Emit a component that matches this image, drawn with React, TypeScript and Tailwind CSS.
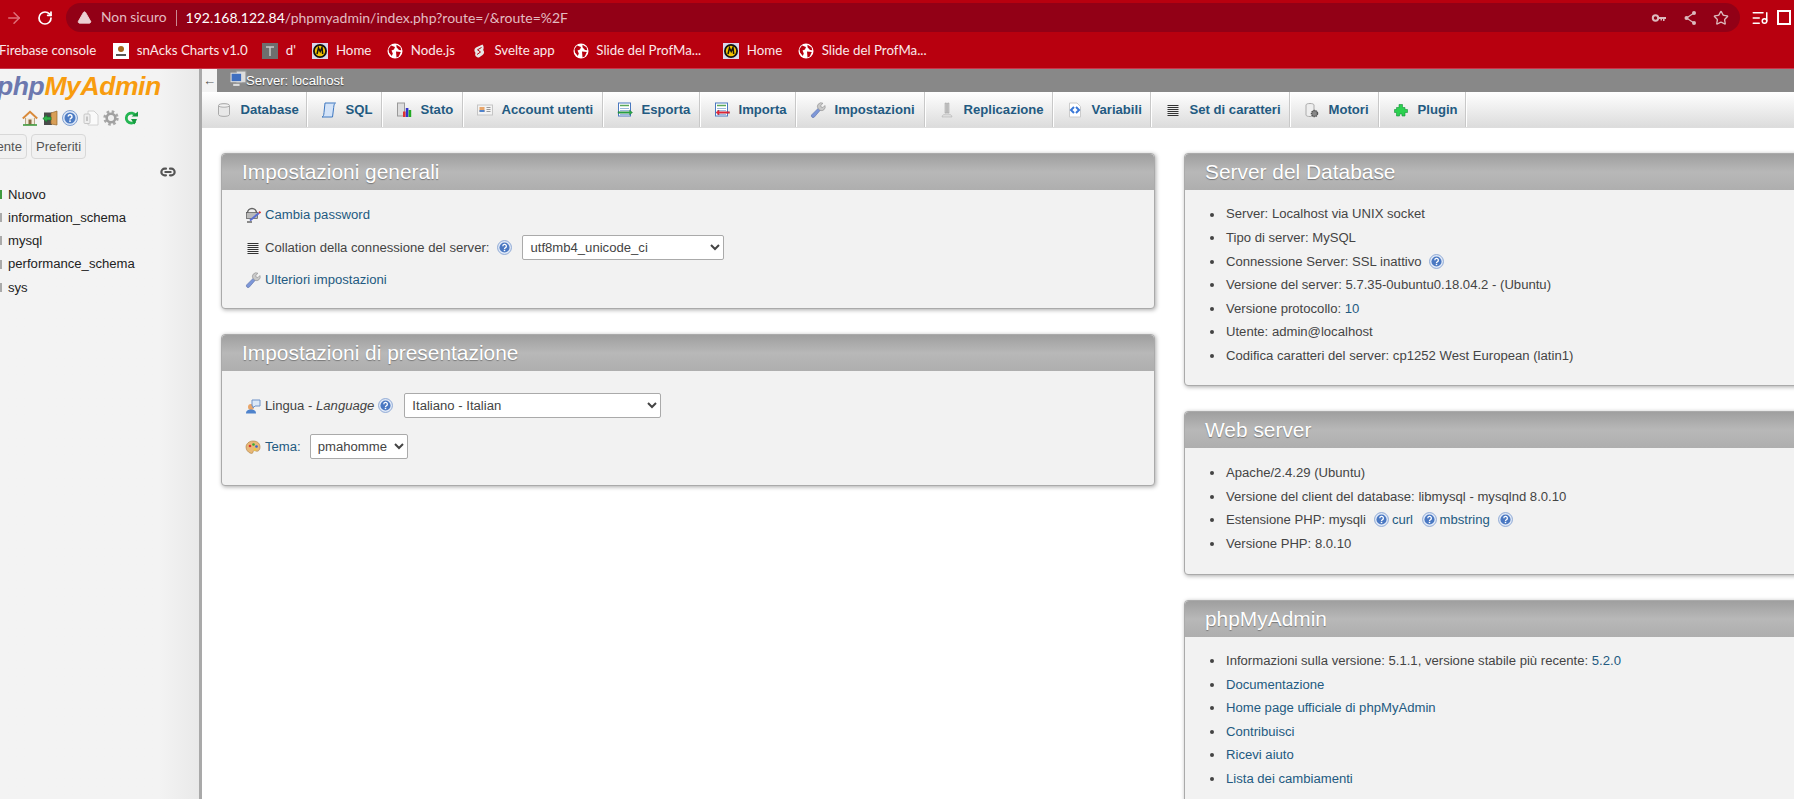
import { ArrowRight, RotateCw, Star, TriangleAlert, ListMusic, Link2 } from "lucide-react";
import type { ReactNode } from "react";

const Ico = ({ children, className = "" }: { children: ReactNode; className?: string }) => (
  <svg viewBox="0 0 16 16" className={`w-4 h-4 shrink-0 ${className}`}>{children}</svg>
);

const Help = ({ className = "" }: { className?: string }) => (
  <svg viewBox="0 0 16 16" className={`w-[15px] h-[15px] shrink-0 ${className}`}>
    <circle cx="8" cy="8" r="7.4" fill="#e3ebf8" stroke="#86a3d2" />
    <circle cx="8" cy="8" r="5.4" fill="#4a78c2" />
    <path d="M6.2 6.6a1.9 1.9 0 1 1 2.7 1.7c-.6.3-.9.6-.9 1.3" fill="none" stroke="#fff" strokeWidth="1.4" />
    <rect x="7.2" y="10.4" width="1.6" height="1.5" fill="#fff" />
  </svg>
);

const Wrench = () => (
  <Ico>
    <path d="M1.5 13 8.5 6l2 2-6.300 7.200a1.800 1.800 0 0 1-2.700-2.200z" fill="#7d97d8" stroke="#5a6fa8" strokeWidth=".6" />
    <path d="M8 6.500a3.700 3.700 0 0 1 5-5.200l-2.200 2 .3 1.800 1.800.4 2-2a3.700 3.700 0 0 1-5 4.800z" fill="#c9c9c9" stroke="#8d8d8d" strokeWidth=".6" />
  </Ico>
);

const Lines = () => (
  <Ico>
    <path d="M2.500 3.500h11M2.500 5.500h11M2.500 7.500h11M2.500 9.500h11M2.500 11.500h11M2.500 13.500h11" stroke="#333" strokeWidth="1" />
  </Ico>
);

const Globe = () => (
  <svg viewBox="0 0 16 16" className="w-4 h-4 shrink-0">
    <circle cx="8" cy="8" r="7.500" fill="#fff" />
    <path d="M4 2.500 8 4 7 6.500 4.500 7.500 5.800 10.500 4.800 13 2 9.500 1.500 6zM9.500 1.800l4 2.500.8 3-2.300-.4-2.500-2.700zM9 8.500l4.800.5-2 4.500L9.500 14.500z" fill="#b8000f" />
  </svg>
);

const HomeFav = () => (
  <svg viewBox="0 0 16 16" className="w-4 h-4 shrink-0">
    <rect width="16" height="16" fill="#d7d7ee" />
    <circle cx="8" cy="8" r="7" fill="#111" />
    <circle cx="8" cy="8" r="5.200" fill="#f0c000" />
    <path d="M5 11 6.500 5 8.200 8.500 10 4.500 10.700 11" fill="none" stroke="#111" strokeWidth="1.500" />
  </svg>
);

const bookmarks = [
  { text: "Firebase console", icon: null, cls: "-ml-[1px] mr-[17px]" },
  {
    text: "snAcks Charts v1.0",
    cls: "mr-[14.5px]",
    icon: (
      <svg viewBox="0 0 16 16" className="w-4 h-4 shrink-0">
        <rect width="16" height="16" fill="#fff" />
        <circle cx="8" cy="6" r="3" fill="#a5671c" />
        <rect x="3" y="11" width="10" height="2" fill="#555" />
      </svg>
    ),
  },
  {
    text: "d'",
    cls: "mr-[16.5px]",
    icon: (
      <svg viewBox="0 0 16 16" className="w-4 h-4 shrink-0">
        <rect width="16" height="16" fill="#6e6e6e" />
        <path d="M4 4h8M8 4v9" stroke="#c8c8c8" strokeWidth="1.500" />
      </svg>
    ),
  },
  { text: "Home", icon: <HomeFav />, cls: "mr-[16px]" },
  { text: "Node.js", icon: <Globe />, cls: "mr-[16px]" },
  {
    text: "Svelte app",
    cls: "mr-[18px]",
    icon: (
      <svg viewBox="0 0 16 16" className="w-4 h-4 shrink-0">
        <path d="M11.500 1.500 5 4.600C2.800 6 3 8.500 4.500 10c-1 2 .2 4.500 3.500 4.500l3.600-2.600c2-1.600 1.800-3.600.6-5 1-2 .3-4.600-.7-5.400z" fill="#e6e6e6" />
        <path d="M10.500 4.500 6.500 6.800 9.500 9 6 11.500" fill="none" stroke="#b8000f" strokeWidth="1" />
      </svg>
    ),
  },
  { text: "Slide del ProfMa...", icon: <Globe />, cls: "mr-[22px]" },
  { text: "Home", icon: <HomeFav />, cls: "mr-[16px]" },
  { text: "Slide del ProfMa...", icon: <Globe />, cls: "" },
];

const ChromeBar = () => (
  <div className="h-[69px] shrink-0 bg-[#b8000f] border-b border-[#c9354a] font-['Lato',sans-serif] text-white">
    <div className="h-[34px] flex items-center pt-[1px]">
      <ArrowRight className="w-[18px] h-[18px] ml-[5px] shrink-0 text-[#df6f7a]" strokeWidth={2} />
      <RotateCw className="w-4 h-4 ml-[14px] shrink-0 text-white" strokeWidth={2.6} />
      <div className="ml-[13px] w-[1674px] shrink-0 h-[29px] rounded-full bg-[#920016] flex items-center">
        <TriangleAlert className="w-[15px] h-[15px] ml-[11px] text-[#ecd0d3] fill-[#ecd0d3]" strokeWidth={1.5} />
        <span className="ml-[9px] text-[#e3bcc1] text-[13.8px]">Non sicuro</span>
        <span className="ml-[9px] w-px h-[16px] bg-[#c98a93]"></span>
        <span className="ml-[9px] text-[14px] text-white">192.168.122.84<span className="text-[#e3bcc1]">/phpmyadmin/index.php?route=/&amp;route=%2F</span></span>
        <div className="ml-auto mr-[11px] flex items-center gap-[15px] text-[#dcb9bd]">
          <svg viewBox="0 0 16 16" className="w-4 h-4">
            <circle cx="4.500" cy="8" r="2.700" fill="none" stroke="currentColor" strokeWidth="2" />
            <path d="M7 7h8v2h-1.500v2H12V9h-1v1.500H9.500V9H7z" fill="currentColor" />
          </svg>
          <svg viewBox="0 0 16 16" className="w-4 h-4">
            <path d="M12 3 4.500 8l7.500 5" fill="none" stroke="currentColor" strokeWidth="1.200" />
            <circle cx="12" cy="3" r="2" fill="currentColor" />
            <circle cx="4.500" cy="8" r="2" fill="currentColor" />
            <circle cx="12" cy="13" r="2" fill="currentColor" />
          </svg>
          <Star className="w-[16px] h-[16px]" strokeWidth={2} />
        </div>
      </div>
      <ListMusic className="w-[18px] h-[18px] ml-[11px] shrink-0 text-white" strokeWidth={2} />
      <span className="ml-[8px] w-[14px] h-[15px] border-2 border-white shrink-0"></span>
    </div>
    <div className="h-[34px] flex items-center text-[13.3px] text-[#fbe9ea] whitespace-nowrap">
      {bookmarks.map((b, i) => (
        <div key={i} className={`flex items-center gap-[7.5px] ${b.cls}`}>
          {b.icon}
          <span>{b.text}</span>
        </div>
      ))}
    </div>
  </div>
);

const Sidebar = () => (
  <div className="w-[199px] shrink-0 h-full bg-linear-to-r from-[#f3f3f3] from-80% to-[#e9e9e9] border-r-[3px] border-[#a9a9a9] box-content overflow-hidden text-[13.12px] text-[#222]">
    <div className="h-[38px] pb-[6px] flex items-end whitespace-nowrap -ml-[3px] italic font-bold text-[26.5px] leading-[30px] tracking-[-0.4px]">
      <span className="text-[#6c78af]">php</span>
      <span className="text-[#f89c0e]">MyAdmin</span>
    </div>
    <div className="mt-[3px] ml-[22px] flex items-center gap-[4px] h-[16px]">
      <Ico>
        <path d="M3.500 8v6.500h9V8" fill="#f4ead9" stroke="#a8926e" strokeWidth=".8" />
        <path d="M.8 8.500 8 1.800l7.200 6.700" fill="none" stroke="#d98a3a" strokeWidth="2" />
        <rect x="6.500" y="9.500" width="3" height="5" fill="#8a6a44" />
        <path d="M1 15h14" stroke="#3f9a3f" strokeWidth="1.600" />
      </Ico>
      <Ico>
        <rect x="2" y="2.500" width="8" height="12.500" fill="#4a4a4a" />
        <path d="M9 3 15 1v14l-6-1z" fill="#d99f57" stroke="#96682c" strokeWidth=".7" />
        <path d="M.8 8.500 4.800 5v2H9v3H4.800v2z" fill="#31b04a" stroke="#137a2b" strokeWidth=".6" />
      </Ico>
      <svg viewBox="0 0 16 16" className="w-4 h-4 shrink-0">
        <circle cx="8" cy="8" r="7.500" fill="#dbe6f7" stroke="#7f9fd0" />
        <circle cx="8" cy="8" r="5.500" fill="#4d7cc4" />
        <path d="M6.200 6.600a1.900 1.900 0 1 1 2.700 1.700c-.6.3-.9.6-.9 1.300" fill="none" stroke="#fff" strokeWidth="1.500" />
        <rect x="7.200" y="10.400" width="1.600" height="1.500" fill="#fff" />
      </svg>
      <Ico className="ml-[1px]">
        <path d="M5 1h6l4 4v10H5z" fill="#fafafa" stroke="#c9c9c9" strokeWidth=".8" />
        <rect x="1" y="4" width="6" height="9.500" rx="1" fill="#eee" stroke="#bdbdbd" strokeWidth=".8" />
        <rect x="3" y="6.500" width="2" height="4.500" fill="#c4c4c4" />
      </Ico>
      <Ico>
        <circle cx="8" cy="8" r="6" fill="none" stroke="#a8a8a8" strokeWidth="3.400" strokeDasharray="2.400 2.300" />
        <circle cx="8" cy="8" r="4.300" fill="none" stroke="#a0a0a0" strokeWidth="2.600" />
        <circle cx="8" cy="8" r="2" fill="#eee" />
      </Ico>
      <Ico>
        <path d="M12.500 5.500A5 5 0 1 0 12 11.500" fill="none" stroke="#24b552" strokeWidth="2.800" />
        <path d="M8.500 6.500h6.500V1.500zM8 9h6l-2.500 5.500z" fill="#179a40" />
      </Ico>
    </div>
    <div className="mt-[8px] flex gap-[4px] -ml-[30px] text-[#555]">
      <span className="w-[57px] h-[25px] flex items-center justify-end pr-[4px] bg-[#f1f1f1] border border-[#d8d8d8] rounded-[4px]">Recente</span>
      <span className="h-[25px] px-[4px] flex items-center bg-[#f1f1f1] border border-[#d8d8d8] rounded-[4px]">Preferiti</span>
    </div>
    <div className="mt-[7px] h-[12px] flex justify-end pr-[23px] items-center">
      <Link2 className="w-4 h-4 text-[#555]" strokeWidth={3.2} />
    </div>
    <ul className="mt-[5px]">
      {["Nuovo", "information_schema", "mysql", "performance_schema", "sys"].map((n, i) => (
        <li key={n} className="h-[23.2px] flex items-center relative pl-[8px]">
          <span className={`absolute left-0 top-[7px] w-[2px] h-[9px] ${i === 0 ? "bg-[#3f9a3f]" : "bg-[#aaa]"}`}></span>
          {n}
        </li>
      ))}
    </ul>
  </div>
);

const tabs: { label: string; w: string; icon: ReactNode }[] = [
  {
    label: "Database",
    w: "w-[105px]",
    icon: (
      <Ico>
        <path d="M2.500 3.500c0-2.500 11-2.500 11 0v9c0 2.500-11 2.500-11 0z" fill="#e8e8e8" stroke="#aaa" />
        <path d="M2.500 3.500c0 2.200 11 2.200 11 0" fill="#fafafa" stroke="#aaa" />
      </Ico>
    ),
  },
  {
    label: "SQL",
    w: "w-[75px]",
    icon: (
      <Ico>
        <path d="M4 1h10.500c-1.500 1-1.500 2-1.800 4.500L11.500 15H1c1.500-.5 1.800-2 2-4.500z" fill="#d3e3f8" stroke="#3f78c0" />
      </Ico>
    ),
  },
  {
    label: "Stato",
    w: "w-[81px]",
    icon: (
      <Ico>
        <rect x="1.500" y="1" width="7" height="13" fill="#ddd" stroke="#999" />
        <rect x="7" y="9.500" width="2.600" height="5.500" fill="#d33" />
        <rect x="9.800" y="6" width="2.600" height="9" fill="#33c" />
        <rect x="12.600" y="8" width="2.600" height="7" fill="#2a2" />
      </Ico>
    ),
  },
  {
    label: "Account utenti",
    w: "w-[140px]",
    icon: (
      <Ico>
        <rect x=".5" y="3" width="15" height="10" fill="#f3f3f3" stroke="#c5c5c5" />
        <rect x="2.500" y="5" width="5" height="5" fill="#e8a56a" />
        <rect x="2.500" y="8" width="5" height="2" fill="#4f83cc" />
        <path d="M9.500 5.500h4M9.500 7.500h4M9.500 9.500h4" stroke="#999" />
      </Ico>
    ),
  },
  {
    label: "Esporta",
    w: "w-[97px]",
    icon: (
      <Ico>
        <rect x="1.500" y="1" width="12" height="13" fill="#fff" stroke="#4a79c0" />
        <path d="M3 3.500h9" stroke="#5aa85a" strokeWidth="1.500" />
        <path d="M3 6.500h9M3 8.500h9M3 12.500h9" stroke="#9bb8dc" />
        <path d="M1 9.700h11.500V8l3 2.500-3 2.500v-1.700H1z" fill="#2aa84a" stroke="#14702c" strokeWidth=".4" />
      </Ico>
    ),
  },
  {
    label: "Importa",
    w: "w-[96px]",
    icon: (
      <Ico>
        <rect x="1.500" y="1" width="12" height="13" fill="#fff" stroke="#4a79c0" />
        <path d="M3 3.500h9" stroke="#5aa85a" strokeWidth="1.500" />
        <path d="M3 6.500h9M3 8.500h9M3 12.500h9" stroke="#9bb8dc" />
        <path d="M15.500 9.700H5V8L2 10.500 5 13v-1.700h10.500z" fill="#e8283c" stroke="#a01020" strokeWidth=".4" />
      </Ico>
    ),
  },
  { label: "Impostazioni", w: "w-[129px]", icon: <Wrench /> },
  {
    label: "Replicazione",
    w: "w-[128px]",
    icon: (
      <Ico>
        <path d="M6 1h1.500v10H6zM8.500 1H10v10H8.500z" fill="#ccc" stroke="#999" strokeWidth=".5" />
        <path d="M3 15c0-2 2-3 5-3s5 1 5 3z" fill="#ddd" stroke="#aaa" strokeWidth=".5" />
      </Ico>
    ),
  },
  {
    label: "Variabili",
    w: "w-[98px]",
    icon: (
      <Ico>
        <path d="M2.500 1h7.500l3.500 3.500V15h-11z" fill="#fff" stroke="#ccc" />
        <path d="M7 5 4 8l3 3M9 5l3 3-3 3" fill="none" stroke="#3a78d8" strokeWidth="2" />
      </Ico>
    ),
  },
  { label: "Set di caratteri", w: "w-[139px]", icon: <Lines /> },
  {
    label: "Motori",
    w: "w-[89px]",
    icon: (
      <Ico>
        <path d="M2 3c0-2 8-2 8 0v10c0 2-8 2-8 0z" fill="#eee" stroke="#aaa" />
        <circle cx="10.500" cy="11.500" r="3" fill="#888" stroke="#555" strokeWidth="1.500" strokeDasharray="1.500 .6" />
      </Ico>
    ),
  },
  {
    label: "Plugin",
    w: "w-[87px]",
    icon: (
      <Ico>
        <path d="M6 2.500h3.500v3H12v2h2.500v3H12V14H9v-2H6.500v2H3.500v-3.500H1.500v-3h2V5.500H6z" fill="#2bd14f" stroke="#15913a" strokeWidth=".6" />
      </Ico>
    ),
  },
];

const Title = ({ children }: { children: ReactNode }) => (
  <div className="h-[36px] rounded-t-[4px] bg-linear-to-b from-[#9f9f9f] via-[#b8b8b8] via-50% to-[#aeaeae] pl-[20px] flex items-center text-[20.9px] text-white [text-shadow:0_1px_1px_#777]">
    {children}
  </div>
);

const Fieldset = ({ title, className = "", children }: { title: string; className?: string; children: ReactNode }) => (
  <div className={`border border-[#aaa] rounded-[4px] bg-[#f2f2f2] shadow-[1px_1px_4px_#aaa] ${className}`}>
    <Title>{title}</Title>
    {children}
  </div>
);

const Li = ({ children }: { children: ReactNode }) => (
  <li className="h-[23.6px] flex items-center relative pl-[41px]">
    <span className="absolute left-[25px] top-[10px] w-[4px] h-[4px] rounded-full bg-[#444]"></span>
    {children}
  </li>
);

const A = ({ children }: { children: ReactNode }) => <a className="text-[#235a81]">{children}</a>;

const Row = ({ icon, className = "", children }: { icon: ReactNode; className?: string; children: ReactNode }) => (
  <div className={`flex items-center pl-[23px] gap-[4px] ${className}`}>
    {icon}
    {children}
  </div>
);

const selectCls = "h-[25px] bg-white border border-[#aaa] rounded-[2px] pl-[3px] text-[13.12px] text-[#444]";

export default function App() {
  return (
    <div className="w-[1794px] h-[799px] overflow-hidden flex flex-col bg-white font-['Liberation_Sans',sans-serif] text-[13.12px] text-[#444]">
      <ChromeBar />
      <div className="flex-1 flex min-h-0">
        <Sidebar />
        <div className="w-[1592px] shrink-0 flex flex-col">
          <div className="h-[23px] bg-[#888] flex items-center shrink-0 text-white [text-shadow:0_1px_1px_#444]">
            <span className="w-[15px] h-full bg-[#f3f3f3] text-[#555] flex items-center justify-center text-[13px] [text-shadow:none]">←</span>
            <svg viewBox="0 0 16 16" className="w-[17px] h-[17px] ml-[13px] -mr-[1px] -mt-[4px] shrink-0">
              <rect x="6" y="1" width="9" height="11" fill="#ddd" stroke="#999" />
              <rect x="1" y="3" width="10" height="8" fill="#3f6fc0" stroke="#ddd" />
              <path d="M3 14h6" stroke="#ddd" strokeWidth="2" />
            </svg>
            Server: localhost
          </div>
          <div className="h-[36px] shrink-0 flex bg-linear-to-b from-white to-[#dcdcdc] border-b border-[#ddd] font-bold text-[#235a81]">
            {tabs.map((t) => (
              <div key={t.label} className={`${t.w} shrink-0 h-full flex items-center pl-[14px] gap-[8.500px] border-r border-[#c8c8c8] shadow-[1px_0_0_#fff] whitespace-nowrap`}>
                {t.icon}
                <span>{t.label}</span>
              </div>
            ))}
          </div>
          <div className="flex-1 flex pl-[19px] pt-[25px] gap-[29px] items-start min-h-0">
            <div className="w-[934px] shrink-0 flex flex-col gap-[25px]">
              <Fieldset title="Impostazioni generali" className="h-[156px]">
                <Row icon={
                  <Ico>
                    <circle cx="7" cy="6" r="4.500" fill="none" stroke="#666" strokeWidth="1.500" />
                    <rect x="1.500" y="5.500" width="11" height="6" fill="#bbb" stroke="#555" strokeWidth=".7" />
                    <path d="M5 13.500 14 6" stroke="#5b6fd0" strokeWidth="2" />
                    <path d="M14 6l1.500-1.200" stroke="#d33" strokeWidth="2" />
                    <path d="M2 15h5" stroke="#222" />
                  </Ico>
                } className="mt-[15px] h-[20px]">
                  <A>Cambia password</A>
                </Row>
                <Row icon={<Lines />} className="mt-[10px] h-[25px]">
                  <span>Collation della connessione del server:</span>
                  <Help className="ml-[4px]" />
                  <select className={`${selectCls} w-[202px] ml-[6px]`} defaultValue="u">
                    <option value="u">utf8mb4_unicode_ci</option>
                  </select>
                </Row>
                <Row icon={<Wrench />} className="mt-[10px] h-[20px]">
                  <A>Ulteriori impostazioni</A>
                </Row>
              </Fieldset>
              <Fieldset title="Impostazioni di presentazione" className="h-[152px]">
                <Row icon={
                  <Ico>
                    <circle cx="6" cy="9" r="3" fill="#e8a56a" />
                    <path d="M1 15.500c0-3 2-4 5-4s5 1 5 4z" fill="#4f83cc" />
                    <path d="M7 2h8v6h-5l-2 2V8H7z" fill="#dbe8f8" stroke="#6f92c8" />
                  </Ico>
                } className="mt-[22px] h-[25px]">
                  <span>Lingua - <i>Language</i></span>
                  <Help />
                  <select className={`${selectCls} w-[257px] ml-[7px]`} defaultValue="i">
                    <option value="i">Italiano - Italian</option>
                  </select>
                </Row>
                <Row icon={
                  <Ico>
                    <path d="M8 2c5 0 7 3 7 6s-2 5-4 4-3 0-3 1-1 2-3 1-4-3-4-6 3-6 7-6z" fill="#e8b878" stroke="#a87a3a" strokeWidth=".6" />
                    <circle cx="5" cy="7" r="1.300" fill="#d33" />
                    <circle cx="8.500" cy="5.500" r="1.300" fill="#3a3" />
                    <circle cx="11.500" cy="7.500" r="1.300" fill="#36c" />
                    <circle cx="10" cy="10.500" r="1.300" fill="#ec3" />
                  </Ico>
                } className="mt-[16px] h-[25px]">
                  <A>Tema:</A>
                  <select className={`${selectCls} w-[98px] ml-[5px]`} defaultValue="p">
                    <option value="p">pmahomme</option>
                  </select>
                </Row>
              </Fieldset>
            </div>
            <div className="w-[700px] shrink-0 flex flex-col gap-[25px]">
              <Fieldset title="Server del Database" className="h-[233px]">
                <ul className="pt-[12.500px]">
                  <Li>Server: Localhost via UNIX socket</Li>
                  <Li>Tipo di server: MySQL</Li>
                  <Li>Connessione Server: SSL inattivo<Help className="ml-[7px]" /></Li>
                  <Li>Versione del server: 5.7.35-0ubuntu0.18.04.2 - (Ubuntu)</Li>
                  <Li><span>Versione protocollo: <A>10</A></span></Li>
                  <Li>Utente: admin@localhost</Li>
                  <Li>Codifica caratteri del server: cp1252 West European (latin1)</Li>
                </ul>
              </Fieldset>
              <Fieldset title="Web server" className="h-[164px]">
                <ul className="pt-[13px]">
                  <Li>Apache/2.4.29 (Ubuntu)</Li>
                  <Li>Versione del client del database: libmysql - mysqlnd 8.0.10</Li>
                  <Li>
                    Estensione PHP: mysqli
                    <Help className="ml-[8px]" />
                    <A><span className="ml-[3px]">curl</span></A>
                    <Help className="ml-[8.500px]" />
                    <A><span className="ml-[3px]">mbstring</span></A>
                    <Help className="ml-[8.500px]" />
                  </Li>
                  <Li>Versione PHP: 8.0.10</Li>
                </ul>
              </Fieldset>
              <Fieldset title="phpMyAdmin" className="h-[300px]">
                <ul className="pt-[12px]">
                  <Li><span>Informazioni sulla versione: 5.1.1, versione stabile più recente: <A>5.2.0</A></span></Li>
                  <Li><A>Documentazione</A></Li>
                  <Li><A>Home page ufficiale di phpMyAdmin</A></Li>
                  <Li><A>Contribuisci</A></Li>
                  <Li><A>Ricevi aiuto</A></Li>
                  <Li><A>Lista dei cambiamenti</A></Li>
                </ul>
              </Fieldset>
            </div>
          </div>
        </div>
      </div>
    </div>
  );
}
